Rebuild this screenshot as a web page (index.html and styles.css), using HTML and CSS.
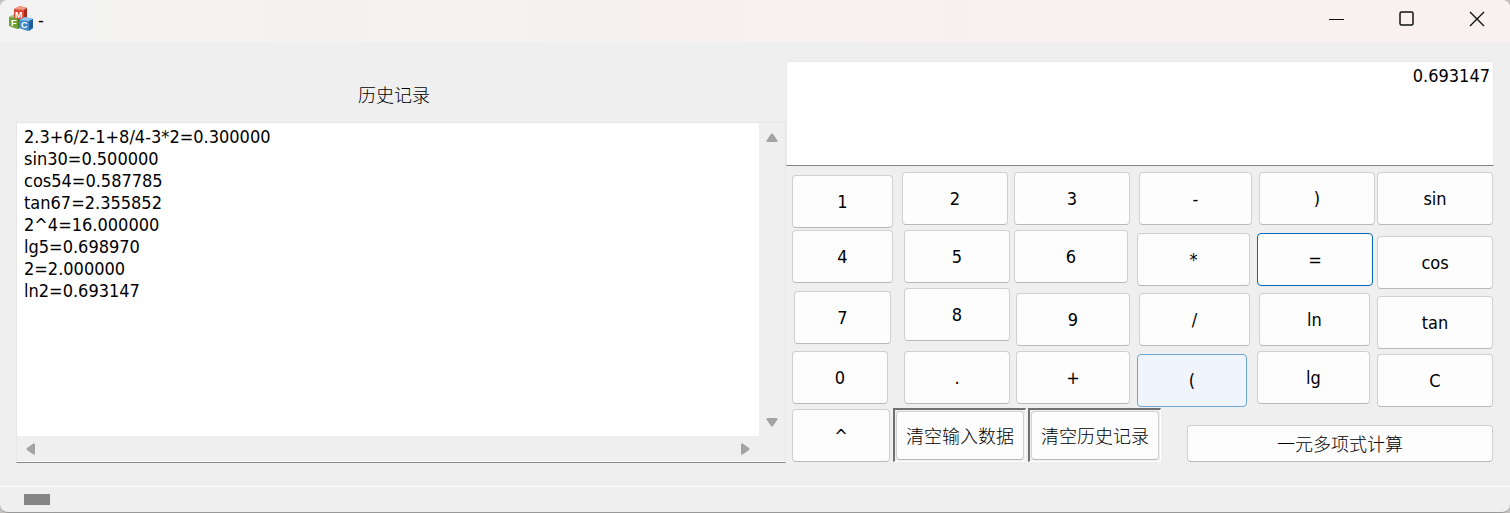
FILE: index.html
```html
<!DOCTYPE html>
<html lang="zh-CN">
<head>
  <meta charset="UTF-8">
  <meta name="viewport" content="width=device-width, initial-scale=1.0">
  <title>-</title>
  <link rel="stylesheet" href="styles.css">
</head>
<body>

<div class="window">
  <div class="titlebar">
    <svg class="app-icon" width="24" height="26" viewBox="0 0 24 26">
      <path d="M0 11 L6 8 L12 10 L12 21 L8 23 L0 20 Z" fill="#6fa33a"/>
      <path d="M0 11 L6 8 L12 10 L9 12 Z" fill="#a9cf7c"/>
      <path d="M9 12 L12 10 L12 21 L9 23 Z" fill="#3f7420"/>
      <path d="M5 3 L11 0 L18 2 L18 11 L14 14 L5 12 Z" fill="#db4a37"/>
      <path d="M5 3 L11 0 L18 2 L15 4 Z" fill="#f19a86"/>
      <path d="M15 4 L18 2 L18 11 L15 14 Z" fill="#a92a1c"/>
      <path d="M10 14 L16 11 L24 13 L24 22 L19 25 L10 22 Z" fill="#3e8cc9"/>
      <path d="M10 14 L16 11 L24 13 L20 15 Z" fill="#8fc4e8"/>
      <path d="M20 15 L24 13 L24 22 L20 25 Z" fill="#215f9c"/>
      <text class="cube-letter" x="6" y="12">M</text>
      <text class="cube-letter" x="2" y="20">F</text>
      <text class="cube-letter" x="12" y="22">C</text>
    </svg>
    <span class="title">-</span>
    <div class="window-buttons">
      <button aria-label="最小化"><svg width="16" height="16" viewBox="0 0 16 16"><path d="M0 8.5H15"/></svg></button>
      <button aria-label="最大化"><svg width="16" height="16" viewBox="0 0 16 16"><rect x="1" y="1" width="13" height="13" rx="1.5" stroke-width="1.5"/></svg></button>
      <button aria-label="关闭"><svg width="16" height="16" viewBox="0 0 16 16"><path d="M1 1L15 15M15 1L1 15" stroke-width="1.4"/></svg></button>
    </div>
  </div>

  <div class="content">
    <div class="history-panel">
      <label class="history-label" for="history">历史记录</label>
      <div class="history-box">
        <textarea class="history" id="history" wrap="off" readonly>2.3+6/2-1+8/4-3*2=0.300000
sin30=0.500000
cos54=0.587785
tan67=2.355852
2^4=16.000000
lg5=0.698970
2=2.000000
ln2=0.693147</textarea>
        <div class="scroll-v">
          <button aria-label="向上滚动"><svg width="12" height="10" viewBox="0 0 12 10"><path d="M5 1Q6 0 7 1L11.5 7.5Q12 9 10.5 9H1.5Q0 9 .5 7.5Z"/></svg></button>
          <button aria-label="向下滚动"><svg width="12" height="10" viewBox="0 0 12 10"><path d="M5 9Q6 10 7 9L11.5 2.5Q12 1 10.5 1H1.5Q0 1 .5 2.5Z"/></svg></button>
        </div>
        <div class="scroll-h">
          <button aria-label="向左滚动"><svg width="10" height="12" viewBox="0 0 10 12"><path d="M1 5Q0 6 1 7L7.5 11.5Q9 12 9 10.5V1.5Q9 0 7.5 .5Z"/></svg></button>
          <button aria-label="向右滚动"><svg width="10" height="12" viewBox="0 0 10 12"><path d="M9 5Q10 6 9 7L2.5 11.5Q1 12 1 10.5V1.5Q1 0 2.5 .5Z"/></svg></button>
        </div>
      </div>
    </div>

    <div class="calculator">
      <textarea class="output" id="output" aria-label="结果">0.693147</textarea>
      <div class="keys">
        <div class="col col-1">
          <button class="key">1</button>
          <button class="key gap-2">4</button>
          <button class="key gap-8 in-left in-right">7</button>
          <button class="key gap-7 in-right-wide">0</button>
        </div>
        <div class="col col-2">
          <button class="key in-right">2</button>
          <button class="key gap-5 in-left">5</button>
          <button class="key gap-5 in-left">8</button>
          <button class="key gap-10 in-left">.</button>
        </div>
        <div class="col col-3">
          <button class="key">3</button>
          <button class="key gap-5 in-right">6</button>
          <button class="key gap-10 in-left">9</button>
          <button class="key gap-5 in-left">+</button>
        </div>
        <div class="col col-4">
          <button class="key in-left">-</button>
          <button class="key gap-8 in-right">*</button>
          <button class="key gap-7 in-left in-right">/</button>
          <button class="key gap-8 in-right-wide hover">(</button>
        </div>
        <div class="col col-5">
          <button class="key in-left">)</button>
          <button class="key gap-8 in-right default">=</button>
          <button class="key gap-7 in-left in-right-wide">ln</button>
          <button class="key gap-5 in-right-wide">lg</button>
        </div>
        <div class="col col-6">
          <button class="key">sin</button>
          <button class="key gap-11">cos</button>
          <button class="key gap-7">tan</button>
          <button class="key gap-5">C</button>
        </div>
      </div>
      <div class="bottom-row">
        <button class="key power">^</button>
        <div class="sunken"><button class="key cn">清空输入数据</button></div>
        <div class="sunken"><button class="key cn">清空历史记录</button></div>
        <button class="key cn poly">一元多项式计算</button>
      </div>
    </div>
  </div>

  <div class="statusbar"><div class="status-block"></div></div>
</div>

</body>
</html>
```
FILE: styles.css
```css
* {
  box-sizing: border-box;
}
body {
  margin: 0;
  background: #c4c0c0;
  font-family: "DejaVu Sans Condensed", "Noto Sans CJK SC", sans-serif;
  font-size: 18px;
  color: #000;
}
button, textarea {
  font: inherit;
  color: inherit;
}
.window {
  display: flex;
  flex-direction: column;
  min-height: 100vh;
  background: #efefef;
  border-bottom: 1px solid #999;
  border-radius: 8px;
  overflow: hidden;
}

/* title bar */
.titlebar {
  display: flex;
  align-items: center;
  height: 42px;
  padding-left: 9px;
  padding-bottom: 4px;
  background: linear-gradient(90deg, #f3f3f3, #f5f1ef 40%, #f9f0f0 70%);
}
.cube-letter {
  font-family: "Liberation Sans", sans-serif;
  font-size: 9px;
  font-weight: bold;
  fill: #fff;
}
.title {
  margin-left: 5px;
}
.window-buttons {
  display: flex;
  margin-left: auto;
}
.window-buttons button {
  display: flex;
  align-items: center;
  justify-content: center;
  width: 70px;
  height: 38px;
  padding: 0 0 0 3px;
  border: none;
  background: none;
}
.window-buttons svg {
  fill: none;
  stroke: #111;
}

/* main area */
.content {
  display: flex;
  flex: 1;
  padding: 19px 16px 23px;
}
.history-panel {
  display: flex;
  flex: 770 1 0;
  flex-direction: column;
  min-width: 0;
}
.history-label {
  height: 61px;
  padding-right: 14px;
  font-family: "Noto Sans CJK SC", sans-serif;
  font-size: 18px;
  font-weight: 300;
  line-height: 66px;
  text-align: center;
}
.history-box {
  display: grid;
  flex: 1;
  grid-template-columns: 1fr 26px;
  grid-template-rows: 1fr 25px;
  padding-bottom: 1px;
  border: 1px solid #e6e6e6;
  border-bottom-color: #858585;
  background: #fff;
}
.history {
  min-width: 0;
  padding: 3px 7px;
  border: none;
  outline: none;
  resize: none;
  overflow: hidden;
  background: #fff;
  line-height: 22px;
}
.scroll-v, .scroll-h {
  display: flex;
  justify-content: space-between;
  background: #efefef;
}
.scroll-v {
  flex-direction: column;
}
.scroll-h {
  grid-column: 1 / 3;
  padding-right: 27px;
}
.scroll-v button, .scroll-h button {
  display: flex;
  align-items: center;
  justify-content: center;
  width: 27px;
  height: 25px;
  padding: 0;
  border: none;
  background: none;
}
.scroll-v button {
  width: 25px;
  height: 29px;
}
.scroll-v svg, .scroll-h svg {
  fill: #a3a3a3;
}

.calculator {
  flex: 708 1 0;
  min-width: 0;
}
.output {
  display: block;
  width: 100%;
  height: 105px;
  padding: 3px;
  border: 1px solid #e9e9e9;
  border-bottom-color: #858585;
  outline: none;
  resize: none;
  overflow: hidden;
  background: #fff;
  line-height: 22px;
  text-align: right;
}

/* keys */
.keys {
  display: flex;
  height: 242px;
  padding: 6px 1px 0 6px;
}
.col {
  display: flex;
  flex-direction: column;
}
.col-1 { flex: 101 1 0; margin-right: 9px; padding-top: 3px; }
.col-2 { flex: 108 1 0; margin-right: 4px; }
.col-3 { flex: 116 1 0; margin-right: 7px; }
.col-4 { flex: 115 1 0; margin-right: 5px; }
.col-5 { flex: 118 1 0; margin-right: 2px; }
.col-6 { flex: 116 1 0; }
.key {
  flex-shrink: 0;
  height: 53px;
  padding: 0;
  border: 1px solid #d0d0d0;
  border-bottom-color: #b9b9b9;
  border-radius: 4px;
  background: #fdfdfd;
}
.key.hover {
  border-color: #6ba5d3;
  background: #f0f5fd;
}
.key.default {
  border-color: #0067c0;
}
.gap-2 { margin-top: 2px; }
.gap-5 { margin-top: 5px; }
.gap-7 { margin-top: 7px; }
.gap-8 { margin-top: 8px; }
.gap-10 { margin-top: 10px; }
.gap-11 { margin-top: 11px; }
.in-left { margin-left: 2px; }
.in-right { margin-right: 2px; }
.in-right-wide { margin-right: 5px; }

.bottom-row {
  display: flex;
  align-items: flex-end;
  padding: 0 1px 0 6px;
}
.power {
  width: 98px;
  margin-right: 3px;
}
.sunken {
  width: 133px;
  height: 54px;
  margin-right: 2px;
  padding: 1px;
  border: 2px solid #fff;
  border-top-color: #707070;
  border-left-color: #707070;
  border-right-width: 1px;
  border-bottom-width: 1px;
}
.sunken .key {
  width: 100%;
  height: 100%;
}
.key.cn {
  padding-bottom: 2px;
  font-family: "Noto Sans CJK SC", sans-serif;
  font-size: 18px;
  font-weight: 300;
}
.key.poly {
  flex: 1;
  height: 37px;
  margin-left: 24px;
}

/* status bar */
.statusbar {
  height: 26px;
  padding: 7px 24px;
  border-top: 1px solid #fff;
}
.status-block {
  width: 26px;
  height: 11px;
  background: #858585;
}
```
